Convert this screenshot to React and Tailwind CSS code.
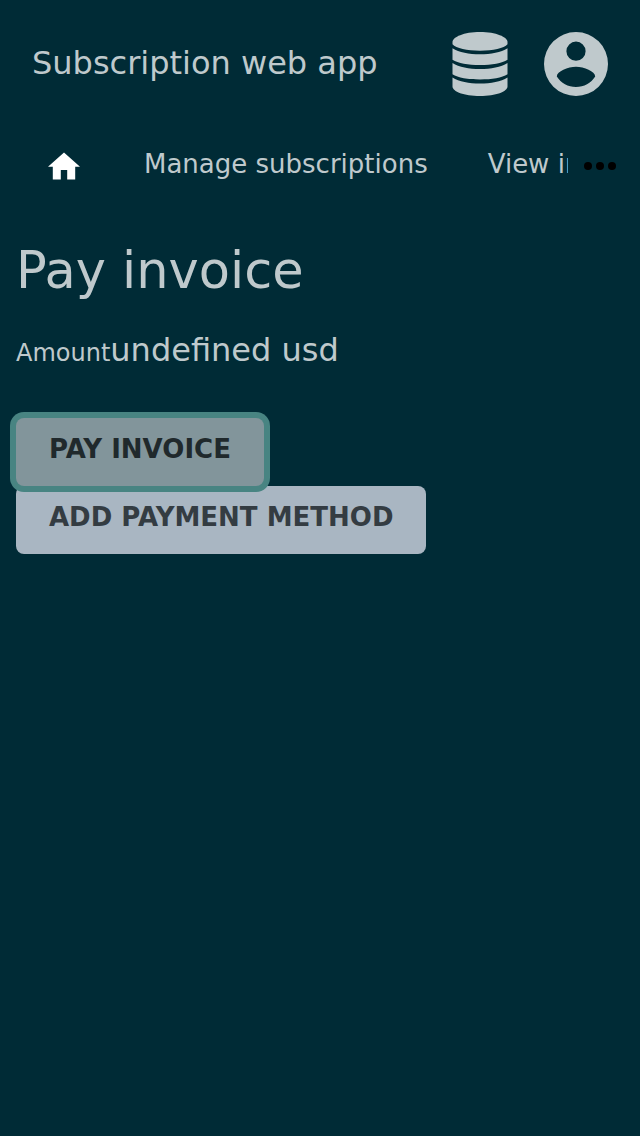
import React from "react";

function DatabaseIcon() {
  return (
    <svg viewBox="0 0 56 64" className="h-16 w-14" fill="currentColor" aria-hidden="true">
      <path d="M28 0C12 0 .5 5 .5 10v2.300C4 16.300 15 18.700 28 18.700s24-2.400 27.500-6.400V10C55.500 5 44 0 28 0Z" />
      <path d="M.5 16.200C7 20.300 17 22.300 28 22.300s21-2 27.500-6.100v11.500C50 31.200 40 33 28 33S6 31.200.5 27.700Z" />
      <path d="M.5 31C7 35 17 37 28 37s21-2 27.500-6v11.300C50 45.800 40 47.500 28 47.500S6 45.800.5 42.300Z" />
      <path d="M.5 45.500C7 49.500 17 51.500 28 51.500s21-2 27.500-6v9C55.500 59.500 44 64 28 64S.5 59.500.5 54.500Z" />
    </svg>
  );
}

function AccountIcon() {
  return (
    <svg viewBox="0 0 64 64" className="size-16" fill="currentColor" aria-hidden="true">
      <path
        fillRule="evenodd"
        d="M32 0a32 32 0 1 0 0 64a32 32 0 1 0 0-64ZM32 9.600a9.600 9.600 0 1 1 0 19.200a9.600 9.600 0 1 1 0-19.200ZM32 34.800C40 34.800 51.200 39.500 51.200 44.500C47 51 40 55 32 55S17 51 12.800 44.500C12.800 39.500 24 34.800 32 34.800Z"
      />
    </svg>
  );
}

function HomeIcon() {
  return (
    <svg viewBox="2 3 20 17" className="h-7 w-8" fill="currentColor" aria-hidden="true">
      <path d="M10 20v-6h4v6h5v-8h3L12 3 2 12h3v8z" />
    </svg>
  );
}

function MoreIcon() {
  return (
    <svg viewBox="0 0 32 8" className="h-2 w-8" fill="currentColor" aria-hidden="true">
      <circle cx="4" cy="4" r="4" />
      <circle cx="16" cy="4" r="4" />
      <circle cx="28" cy="4" r="4" />
    </svg>
  );
}

export default function App() {
  return (
    <div className="min-h-screen bg-[#002b36] font-['DejaVu_Sans',sans-serif] text-[#bfc9cc]">
      <header className="flex h-32 items-center justify-between px-8">
        <span className="pb-0.5 text-[32px] leading-10">Subscription web app</span>
        <div className="flex items-center gap-9">
          <button type="button" aria-label="Data">
            <DatabaseIcon />
          </button>
          <button type="button" aria-label="Account">
            <AccountIcon />
          </button>
        </div>
      </header>
      <nav className="flex h-[76px] items-center">
        <div className="flex min-w-0 flex-1 items-center gap-15 overflow-hidden pl-12 whitespace-nowrap text-[26px] leading-8">
          <a href="#home" aria-label="Home" className="shrink-0 pr-1 text-white">
            <HomeIcon />
          </a>
          <a href="#subscriptions" className="pb-1">Manage subscriptions</a>
          <a href="#invoices" className="pb-1">View invoices</a>
        </div>
        <button type="button" aria-label="More" className="mr-6 ml-4 shrink-0 text-black">
          <MoreIcon />
        </button>
      </nav>
      <main className="px-4 pt-9">
        <h1 className="text-[51px] leading-[62px]">Pay invoice</h1>
        <p className="mt-7 text-[32px] leading-10">
          <span className="text-2xl">Amount</span>undefined usd
        </p>
        <div className="mt-12 flex flex-col items-start text-[26px] font-bold">
          <button
            type="button"
            className="relative h-[68px] rounded-lg bg-[#82959b] px-[33px] pb-1.5 text-[#20292c] ring-6 ring-[#488482]"
          >
            PAY INVOICE
          </button>
          <button type="button" className="h-[68px] rounded-lg bg-[#a9b6c2] px-[33px] pb-1.5 text-[#343c42]">
            ADD PAYMENT METHOD
          </button>
        </div>
      </main>
    </div>
  );
}
